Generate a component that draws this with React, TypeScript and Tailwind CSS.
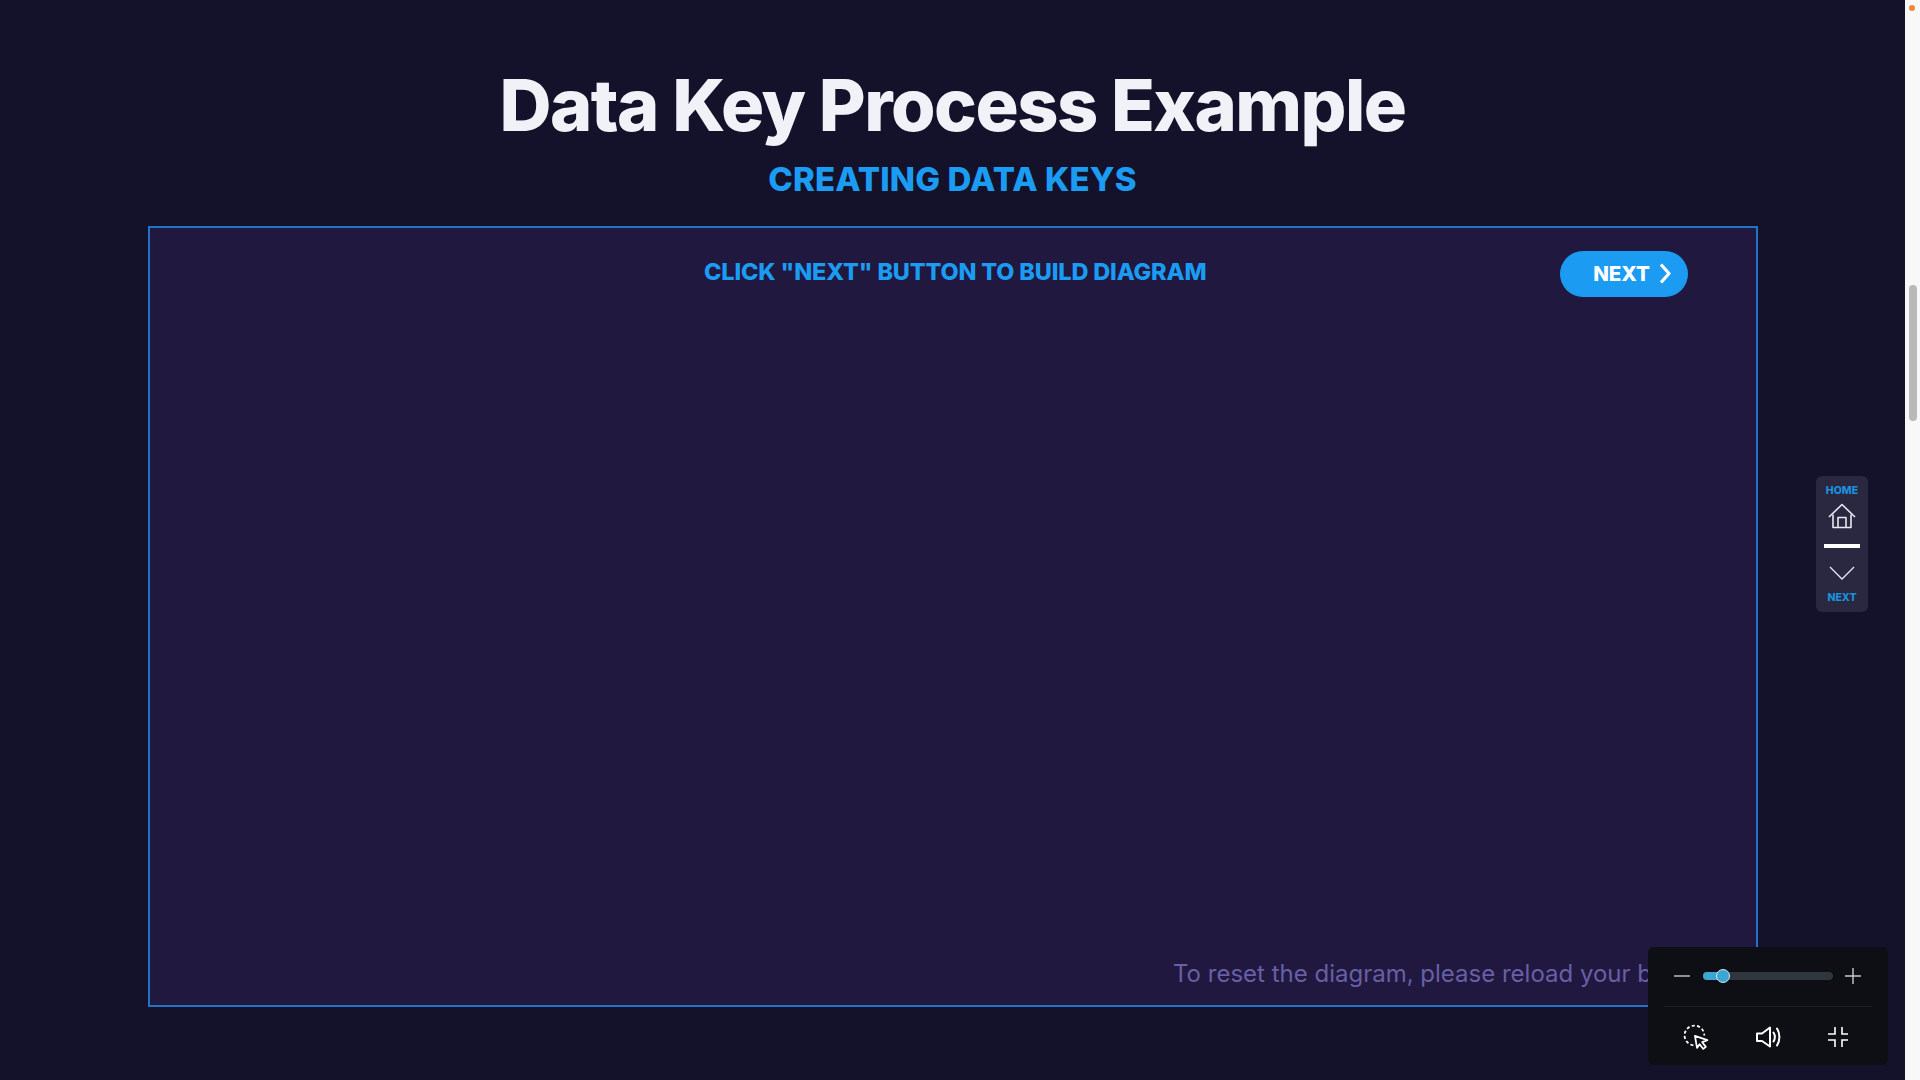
function ClickIcon() {
  return (
    <svg width="27" height="27" viewBox="0 0 26 26" fill="none" stroke="white" strokeWidth="1.7">
      <path d="M10 20.5a9.5 9.5 0 1 1 10.5-9.5" strokeDasharray="3 2.2" />
      <path d="M11.5 11.5l12 4-5 2 3.5 4.5-2.5 2-3.5-4.5-2.5 3.5z" fill="#0d0f14" strokeLinejoin="round" />
    </svg>
  );
}

function SpeakerIcon() {
  return (
    <svg width="26" height="24" viewBox="0 0 26 24" fill="none" stroke="white" strokeWidth="2" strokeLinejoin="round">
      <path d="M1 8.5h5L14 2.5v19l-8-5.5H1z" />
      <path d="M17.5 7.5c1.6 2.6 1.6 6.4 0 9" strokeLinecap="round" />
      <path d="M21 3.5c3.2 5 3.2 12 0 17" strokeLinecap="round" />
    </svg>
  );
}

function CollapseIcon() {
  return (
    <svg width="20" height="20" viewBox="0 0 20 20" fill="none" stroke="white" strokeWidth="1.6">
      <path d="M7 0v7H0M14 0v7h6M7 20v-7H0M14 20v-7h6" />
    </svg>
  );
}

function HouseIcon() {
  return (
    <svg width="28" height="26" viewBox="0 0 28 26" fill="none" stroke="#e8e8f0" strokeWidth="1.6" strokeLinejoin="round">
      <path d="M1 14L14 1.5 27 14" />
      <path d="M5 11.5V24.5H23V11.5" />
      <path d="M10 24.5V14.5H18V24.5" />
    </svg>
  );
}

export default function App() {
  return (
    <div className="relative flex h-screen overflow-hidden bg-[#f8f8f8] font-['Inter',sans-serif]">
      <main className="flex w-[1905px] flex-col items-center bg-[#14122a]">
        <h1 className="mt-[62px] text-[72px] leading-[86px] font-extrabold tracking-[-1.5px] text-[#f1f2f8]">
          Data Key Process Example
        </h1>
        <h2 className="mt-[11px] text-[33px] leading-[40px] font-extrabold tracking-[0.15px] text-[#1b9cf2]">
          CREATING DATA KEYS
        </h2>

        {/* Diagram box */}
        <section className="mt-[27px] flex h-[781px] w-[1610px] flex-col self-start ml-[148px] border-2 border-[#2273c6] bg-[#20183f]">
          <div className="flex items-start pt-[28px] pl-[554px]">
            <p className="w-[502px] text-[23.5px] leading-[32px] font-extrabold tracking-[-0.15px] whitespace-nowrap text-[#1b9cf2]">
              CLICK "NEXT" BUTTON TO BUILD DIAGRAM
            </p>
            <button
              type="button"
              className="mt-[-5px] ml-[354px] flex h-[46px] w-[128px] items-center justify-end gap-[9px] rounded-full bg-[#1b9cf2] pr-[17px] text-[20.5px] font-extrabold text-white"
            >
              NEXT
              <svg className="mb-[2px]" width="12" height="21" viewBox="0 0 12 21" fill="none" stroke="white" strokeWidth="3.2" strokeLinejoin="round">
                <path d="M2 1.5l8 9-8 9" />
              </svg>
            </button>
          </div>
          <p className="mt-auto mb-[15px] ml-[1023px] text-[24px] leading-[32px] whitespace-nowrap text-[#685fa5]">
            To reset the diagram, please reload your browser.
          </p>
        </section>
      </main>

      {/* Browser scrollbar */}
      <div className="relative w-[15px] bg-[#f8f8f8]">
        <div className="absolute top-[5px] left-[4px] h-[6px] w-[6px] rounded-full bg-[#f0883a]" />
        <div className="absolute top-[285px] left-[4px] h-[136px] w-[8px] rounded-full bg-[#b9b9b9]" />
      </div>

      {/* Section nav */}
      <nav className="absolute top-[476px] left-[1816px] flex h-[136px] w-[52px] flex-col items-center rounded-md bg-[#2a2840] pt-[8px]">
        <span className="text-[10.5px] leading-[14px] font-extrabold text-[#1b8fdc]">HOME</span>
        <div className="mt-[5px]">
          <HouseIcon />
        </div>
        <div className="mt-[15px] h-[4px] w-[36px] bg-white" />
        <svg className="mt-[18px]" width="26" height="14" viewBox="0 0 26 14" fill="none" stroke="#e8e8f0" strokeWidth="1.3">
          <path d="M1 1l12 12L25 1" />
        </svg>
        <span className="mt-[11px] text-[10.5px] leading-[14px] font-extrabold text-[#1b8fdc]">NEXT</span>
      </nav>

      {/* Player controls */}
      <div className="absolute top-[947px] left-[1648px] flex h-[118px] w-[240px] flex-col rounded-md bg-[#0d0f14] px-[16px] text-white">
        <div className="flex h-[60px] items-center border-b border-[#1c1e24] pb-[1px] pl-[9px]">
          <svg width="18" height="18" viewBox="0 0 18 18" stroke="#c8c8c8" strokeWidth="1.4">
            <path d="M1 9h16" />
          </svg>
          <div className="relative mr-[11px] ml-[12px] h-[8px] w-[130px] rounded-full bg-[#30363d]">
            <div className="h-full w-[20px] rounded-full bg-[#3ba6d4]" />
            <div className="absolute top-[-3px] left-[13px] h-[14px] w-[14px] rounded-full border border-[#cfe8f4] bg-[#3ba6d4]" />
          </div>
          <svg width="18" height="18" viewBox="0 0 18 18" stroke="#c8c8c8" strokeWidth="1.4">
            <path d="M1 9h16M9 1v16" />
          </svg>
        </div>
        <div className="flex flex-1 items-center justify-between pt-[2px] pr-[24px] pl-[19px]">
          <ClickIcon />
          <SpeakerIcon />
          <CollapseIcon />
        </div>
      </div>
    </div>
  );
}
